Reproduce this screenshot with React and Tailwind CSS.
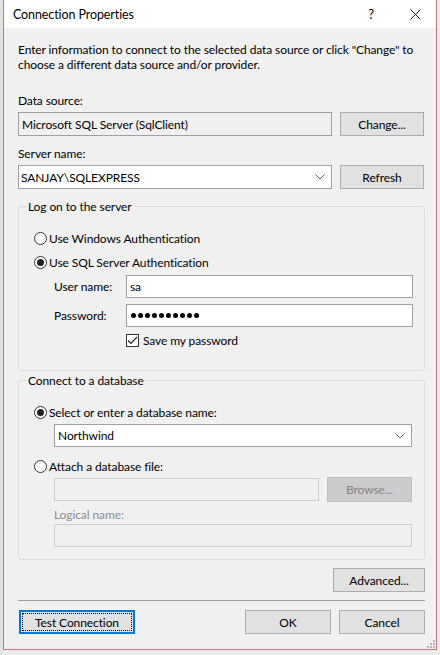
import React from "react";

function Radio({ checked, label }) {
  return (
    <div className="flex items-center h-[16px] gap-[2px]">
      <span className="w-[13px] h-[13px] rounded-full border border-[#333333] bg-white flex items-center justify-center">
        {checked && <span className="w-[7px] h-[7px] rounded-full bg-[#222222]" />}
      </span>
      <span>{label}</span>
    </div>
  );
}

function Chevron() {
  return (
    <svg width="10" height="6" viewBox="0 0 10 6" className="mr-[6px]">
      <polyline points="0.5,0.5 5,5 9.5,0.5" fill="none" stroke="#606060" strokeWidth="1" />
    </svg>
  );
}

function Button({ children, className = "" }) {
  return (
    <button
      type="button"
      className={`h-[24px] bg-[#e1e1e1] border border-[#adadad] flex items-center justify-center text-black ${className}`}
    >
      {children}
    </button>
  );
}

export default function App() {
  return (
    <div className="w-[440px] h-[655px] bg-[#ebebeb] flex font-['Lato',sans-serif] text-[12px] tracking-[-0.1px] leading-[15px] text-black overflow-hidden">
      {/* sliver of the window behind */}
      <div className="w-[3px] h-full bg-[#e2e2e2]" />

      <div className="w-[434px] h-[650px] border-x border-b border-[#c7737b] bg-[#f0f0f0] flex flex-col">
        {/* title bar */}
        <div className="h-[28px] bg-white flex items-center shrink-0">
          <span className="flex-1 pl-[9px] text-[12.5px]">Connection Properties</span>
          <span className="w-[46px] flex justify-center text-[13px]">?</span>
          <span className="w-[42px] flex justify-center">
            <svg width="11" height="11" viewBox="0 0 11 11">
              <path d="M0.5 0.5 L10.5 10.5 M10.5 0.5 L0.5 10.5" stroke="#111" strokeWidth="1" />
            </svg>
          </span>
        </div>

        <div className="flex flex-col pl-[14px] pr-[11px]">
          <p className="mt-[14px] whitespace-nowrap">
            Enter information to connect to the selected data source or click "Change" to
            <br />
            choose a different data source and/or provider.
          </p>

          <div className="mt-[21px]">Data source:</div>
          <div className="mt-[4px] flex gap-[8px]">
            <div className="w-[314px] h-[24px] border border-[#a0a0a0] bg-[#f0f0f0] flex items-center pl-[3px]">
              Microsoft SQL Server (SqlClient)
            </div>
            <Button className="w-[84px]">Change...</Button>
          </div>

          <div className="mt-[10px]">Server name:</div>
          <div className="mt-[4px] flex gap-[8px]">
            <div className="w-[314px] h-[24px] border border-[#a0a0a0] bg-white flex items-center justify-between pl-[2px]">
              <span>SANJAY\SQLEXPRESS</span>
              <Chevron />
            </div>
            <Button className="w-[84px]">Refresh</Button>
          </div>

          {/* Log on to the server */}
          <fieldset className="mt-[10px] w-[407px] border border-[#dcdcdc] rounded-[3px]">
            <legend className="ml-[7px] px-[2px]">Log on to the server</legend>
            <div className="flex flex-col pl-[15px] pb-[22px]">
              <div className="mt-[16px]">
                <Radio label="Use Windows Authentication" />
              </div>
              <div className="mt-[8px]">
                <Radio checked label="Use SQL Server Authentication" />
              </div>
              <div className="mt-[5px] flex items-center pl-[20px]">
                <span className="w-[72px]">User name:</span>
                <div className="w-[287px] h-[23px] border border-[#a0a0a0] bg-white flex items-center pl-[3px]">sa</div>
              </div>
              <div className="mt-[6px] flex items-center pl-[20px]">
                <span className="w-[72px]">Password:</span>
                <div className="w-[287px] h-[23px] border border-[#a0a0a0] bg-white flex items-center pl-[4px] gap-[2px]">
                  {Array.from({ length: 10 }).map((_, i) => (
                    <span key={i} className="w-[5px] h-[5px] rounded-full bg-black" />
                  ))}
                </div>
              </div>
              <div className="mt-[5px] flex items-center h-[16px] pl-[92px] gap-[4px]">
                <span className="w-[13px] h-[13px] border border-[#333333] bg-white flex items-center justify-center">
                  <svg width="11" height="9" viewBox="0 0 11 9">
                    <polyline points="1,4.5 4,7.5 10,1" fill="none" stroke="#222" strokeWidth="1.2" />
                  </svg>
                </span>
                <span>Save my password</span>
              </div>
            </div>
          </fieldset>

          {/* Connect to a database */}
          <fieldset className="mt-[2px] w-[407px] border border-[#dcdcdc] rounded-[3px]">
            <legend className="ml-[7px] px-[2px]">Connect to a database</legend>
            <div className="flex flex-col pl-[15px] pb-[12px]">
              <div className="mt-[16px]">
                <Radio checked label="Select or enter a database name:" />
              </div>
              <div className="mt-[4px] ml-[20px] w-[358px] h-[23px] border border-[#a0a0a0] bg-white flex items-center justify-between pl-[3px]">
                <span>Northwind</span>
                <Chevron />
              </div>
              <div className="mt-[11px]">
                <Radio label="Attach a database file:" />
              </div>
              <div className="mt-[3px] ml-[20px] flex items-center gap-[8px] h-[25px]">
                <div className="w-[265px] h-[23px] border border-[#cccccc] bg-[#f0f0f0]" />
                <div className="w-[85px] h-[25px] bg-[#cccccc] border border-[#bfbfbf] flex items-center justify-center text-[#838383]">
                  Browse...
                </div>
              </div>
              <div className="mt-[5px] ml-[20px] text-[#8d8d8d]">Logical name:</div>
              <div className="mt-[2px] ml-[20px] w-[358px] h-[23px] border border-[#cccccc] bg-[#f0f0f0]" />
            </div>
          </fieldset>

          <div className="mt-[8px] flex justify-end">
            <Button className="w-[92px]">Advanced...</Button>
          </div>

          <div className="mt-[8px] h-[1px] bg-[#a0a0a0]" />

          <div className="mt-[9px] flex items-center">
            <button
              type="button"
              className="ml-[1px] w-[116px] h-[24px] bg-[#e1e1e1] border-2 border-[#0078d7] outline-1 outline-dotted outline-black outline-offset-[-4px] flex items-center justify-center"
            >
              Test Connection
            </button>
            <div className="flex-1" />
            <Button className="w-[86px]">OK</Button>
            <Button className="w-[86px] ml-[8px]">Cancel</Button>
          </div>

          {/* size grip */}
          <div className="mt-[6px] flex justify-end mr-[-10px]">
            <svg width="8" height="8" viewBox="0 0 8 8">
              <rect x="6" y="0" width="2" height="2" fill="#b8b8b8" />
              <rect x="3" y="3" width="2" height="2" fill="#b8b8b8" />
              <rect x="6" y="3" width="2" height="2" fill="#b8b8b8" />
              <rect x="0" y="6" width="2" height="2" fill="#b8b8b8" />
              <rect x="3" y="6" width="2" height="2" fill="#b8b8b8" />
              <rect x="6" y="6" width="2" height="2" fill="#b8b8b8" />
            </svg>
          </div>
        </div>
      </div>
    </div>
  );
}
